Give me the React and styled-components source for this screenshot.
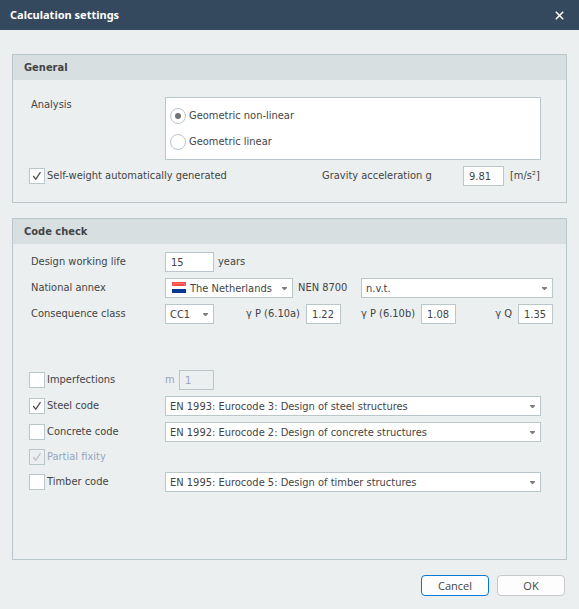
import React from "react";
import styled, { createGlobalStyle } from "styled-components";

const CODES = {
  steel: "EN 1993: Eurocode 3: Design of steel structures",
  concrete: "EN 1992: Eurocode 2: Design of concrete structures",
  timber: "EN 1995: Eurocode 5: Design of timber structures",
};

const Dropdown = ({ label, options, icon, width }) => (
  <SelectWrap $width={width}>
    {icon}
    <Select aria-label={label} $icon={Boolean(icon)}>
      {options.map((option) => (
        <option key={option}>{option}</option>
      ))}
    </Select>
    <Arrow viewBox="0 0 5 3" aria-hidden="true">
      <path d="M0 0H5V1L3 3H2L0 1Z" fill="#808080" />
    </Arrow>
  </SelectWrap>
);

const CheckOption = ({ children, ...props }) => (
  <CheckLabel $disabled={props.disabled}>
    <CheckWrap>
      <Check type="checkbox" {...props} />
      <Tick viewBox="0 0 16 16" aria-hidden="true">
        <path d="M4.2 8L6.8 11.2L11.5 4.2" />
      </Tick>
    </CheckWrap>
    {children}
  </CheckLabel>
);

const Factor = ({ id, label, value }) => (
  <FactorWrap>
    <label htmlFor={id}>{label}</label>
    <TextInput id={id} defaultValue={value} $width={35} />
  </FactorWrap>
);

const DutchFlag = () => (
  <Flag viewBox="0 0 14 11" aria-hidden="true">
    <path d="M0 0H14V4H0Z" fill="#f8484a" />
    <path d="M1.5 4V1.5H12.5V4" fill="none" stroke="#f97476" />
    <path d="M0 4H14V7H0Z" fill="#ffffff" />
    <path d="M0 7H14V11H0Z" fill="#0a3795" />
  </Flag>
);

const App = () => {
  return (
    <Dialog>
      <GlobalStyle />
      <TitleBar>
        <Title>Calculation settings</Title>
        <CloseButton aria-label="Close">
          <svg width="9" height="9" viewBox="0 0 9 9">
            <path d="M0.8 0.8L8.2 8.2M8.2 0.8L0.8 8.2" />
          </svg>
        </CloseButton>
      </TitleBar>

      <Content>
        <Group>
          <GroupTitle>General</GroupTitle>
          <GroupBody $top={17} $bottom={16}>
            <Row $top>
              <Caption id="analysis">Analysis</Caption>
              <RadioPanel role="radiogroup" aria-labelledby="analysis">
                <RadioLabel>
                  <Radio type="radio" name="analysis" defaultChecked />
                  Geometric non-linear
                </RadioLabel>
                <RadioLabel>
                  <Radio type="radio" name="analysis" />
                  Geometric linear
                </RadioLabel>
              </RadioPanel>
            </Row>
            <Row>
              <CheckOption defaultChecked>
                Self-weight automatically generated
              </CheckOption>
              <Gravity>
                <GravityLabel htmlFor="gravity">
                  Gravity acceleration g
                </GravityLabel>
                <TextInput id="gravity" defaultValue="9.81" $width={41} />
                <Unit>[m/s²]</Unit>
              </Gravity>
            </Row>
          </GroupBody>
        </Group>

        <Group $fill>
          <GroupTitle>Code check</GroupTitle>
          <GroupBody $top={8} $bottom={40}>
            <Row $wide>
              <Caption as="label" htmlFor="life">
                Design working life
              </Caption>
              <TextInput id="life" defaultValue="15" $width={49} />
              <Suffix>years</Suffix>
            </Row>
            <Row $wide>
              <Caption>National annex</Caption>
              <Dropdown
                label="National annex"
                options={["The Netherlands"]}
                icon={<DutchFlag />}
                width={128}
              />
              <AnnexLabel>NEN 8700</AnnexLabel>
              <Dropdown label="NEN 8700" options={["n.v.t."]} />
            </Row>
            <Row $wide>
              <Caption>Consequence class</Caption>
              <Dropdown
                label="Consequence class"
                options={["CC1", "CC2", "CC3"]}
                width={49}
              />
              <Factors>
                <Factor id="factor-a" label="γ P (6.10a)" value="1.22" />
                <Factor id="factor-b" label="γ P (6.10b)" value="1.08" />
                <Factor id="factor-q" label="γ Q" value="1.35" />
              </Factors>
            </Row>

            <Spacer />

            <Row>
              <Caption as="div">
                <CheckOption>Imperfections</CheckOption>
              </Caption>
              <Imperfection>
                <label htmlFor="imperfection">m</label>
                <TextInput
                  id="imperfection"
                  defaultValue="1"
                  $width={35}
                  disabled
                />
              </Imperfection>
            </Row>
            <Row>
              <Caption as="div">
                <CheckOption defaultChecked>Steel code</CheckOption>
              </Caption>
              <Dropdown label="Steel code" options={[CODES.steel]} />
            </Row>
            <Row>
              <Caption as="div">
                <CheckOption>Concrete code</CheckOption>
              </Caption>
              <Dropdown label="Concrete code" options={[CODES.concrete]} />
            </Row>
            <Row $short>
              <CheckOption defaultChecked disabled>
                Partial fixity
              </CheckOption>
            </Row>
            <Row>
              <Caption as="div">
                <CheckOption>Timber code</CheckOption>
              </Caption>
              <Dropdown label="Timber code" options={[CODES.timber]} />
            </Row>
          </GroupBody>
        </Group>
      </Content>

      <Footer>
        <Button $primary>Cancel</Button>
        <Button>OK</Button>
      </Footer>
    </Dialog>
  );
};

const GlobalStyle = createGlobalStyle`
  * {
    box-sizing: border-box;
  }

  body {
    margin: 0;
    background-color: #ebeff0;
  }

  body, input, select, button {
    font-family: Tahoma, "DejaVu Sans Condensed", sans-serif;
    font-size: 11px;
    color: #444444;
  }
`;

const Dialog = styled.main`
  min-height: 100vh;
  display: flex;
  flex-direction: column;
  line-height: 16px;
  white-space: nowrap;
`;

const TitleBar = styled.header`
  height: 30px;
  padding: 0 10px;
  display: flex;
  align-items: center;
  justify-content: space-between;
  background-color: #34495e;
`;

const Title = styled.h1`
  margin: 0;
  font-family: "Segoe UI", "Noto Sans", sans-serif;
  font-size: 11px;
  font-weight: 700;
  color: #ffffff;
`;

const CloseButton = styled.button`
  width: 20px;
  height: 20px;
  padding: 0;
  display: flex;
  align-items: center;
  justify-content: center;
  border: none;
  background: none;
  cursor: pointer;

  path {
    stroke: #ffffff;
    stroke-width: 1.5;
  }
`;

const Content = styled.div`
  padding: 24px 12px 15px;
  display: flex;
  flex-direction: column;
  flex: 1;
  gap: 15px;
`;

const Group = styled.section`
  border: 1px solid #b9c7cb;
  flex: ${({ $fill }) => ($fill ? 1 : "none")};
`;

const GroupTitle = styled.h2`
  height: 25px;
  margin: 0;
  padding: 0 11px;
  background-color: #d8dfe1;
  font-size: 11px;
  font-weight: 700;
  line-height: 25px;
`;

const GroupBody = styled.div`
  padding: ${({ $top, $bottom }) => `${$top}px 0 ${$bottom}px 16px`};
  display: flex;
  flex-direction: column;
  gap: 6px;
`;

const Row = styled.div`
  min-height: ${({ $short }) => ($short ? 18 : 20)}px;
  padding-right: ${({ $wide }) => ($wide ? 13 : 25)}px;
  display: flex;
  align-items: ${({ $top }) => ($top ? "flex-start" : "center")};
`;

const Caption = styled.span`
  width: 136px;
  padding-left: ${({ as }) => (as === "div" ? 0 : 2)}px;
  flex: none;
`;

const RadioPanel = styled.div`
  height: 63px;
  padding: 0 4px;
  display: flex;
  flex-direction: column;
  justify-content: center;
  flex: 1;
  gap: 10px;
  border: 1px solid #b9c7cb;
  background-color: #ffffff;
`;

const RadioLabel = styled.label`
  display: flex;
  align-items: center;
  gap: 3px;
`;

const Radio = styled.input`
  width: 16px;
  height: 16px;
  margin: 0;
  display: grid;
  place-content: center;
  appearance: none;
  border: 1px solid #b9c7cb;
  border-radius: 50%;
  background-color: #ffffff;

  &:checked::before {
    content: "";
    width: 6px;
    height: 6px;
    border-radius: 50%;
    background-color: #727272;
  }
`;

const CheckLabel = styled.label`
  display: flex;
  align-items: center;
  gap: 2px;
  color: ${({ $disabled }) => ($disabled ? "#97a5bd" : "inherit")};
`;

const CheckWrap = styled.span`
  width: 16px;
  height: 16px;
  display: grid;

  > * {
    grid-area: 1 / 1;
  }
`;

const Tick = styled.svg`
  width: 16px;
  height: 16px;
  visibility: hidden;
  pointer-events: none;
  fill: none;
  stroke: #4c4c4c;
  stroke-width: 1.2;
`;

const Check = styled.input`
  width: 16px;
  height: 16px;
  margin: 0;
  appearance: none;
  border: 1px solid #b9c7cb;
  background-color: #ffffff;

  &:disabled {
    background-color: transparent;
  }

  &:checked + ${Tick} {
    visibility: visible;
  }

  &:disabled + ${Tick} {
    stroke: #b9c1c4;
  }
`;

const TextInput = styled.input`
  width: ${({ $width }) => $width}px;
  height: 20px;
  padding: 0 5px;
  border: 1px solid #b9c7cb;
  border-radius: 0;
  background-color: #ffffff;

  &:disabled {
    background-color: transparent;
    color: #97a5bd;
  }
`;

const Gravity = styled.div`
  margin-left: auto;
  display: flex;
  align-items: center;
`;

const GravityLabel = styled.label`
  width: 141px;
`;

const Unit = styled.span`
  width: 37px;
  padding-left: 6px;
`;

const Suffix = styled.span`
  padding-left: 4px;
`;

const AnnexLabel = styled.span`
  width: 68px;
  padding-left: 5px;
  flex: none;
`;

const SelectWrap = styled.div`
  position: relative;
  width: ${({ $width }) => ($width ? `${$width}px` : "auto")};
  flex: ${({ $width }) => ($width ? "none" : 1)};
`;

const Select = styled.select`
  width: 100%;
  height: 20px;
  padding: 0 4px;
  padding-left: ${({ $icon }) => ($icon ? 24 : 4)}px;
  display: block;
  appearance: none;
  border: 1px solid #b9c7cb;
  border-radius: 0;
  background-color: #ffffff;
`;

const Arrow = styled.svg`
  position: absolute;
  top: 9px;
  right: 6px;
  width: 5px;
  height: 3px;
  pointer-events: none;
`;

const Flag = styled.svg`
  position: absolute;
  top: 4px;
  left: 7px;
  width: 14px;
  height: 11px;
  pointer-events: none;
`;

const Factors = styled.div`
  padding-left: 32px;
  display: flex;
  flex: 1;
  gap: 20px;
`;

const FactorWrap = styled.div`
  display: flex;
  align-items: center;
  gap: 6px;

  &:last-child {
    margin-left: auto;
  }
`;

const Spacer = styled.div`
  height: 34px;
`;

const Imperfection = styled.div`
  width: 49px;
  display: flex;
  align-items: center;
  justify-content: space-between;
  color: #97a5bd;
`;

const Footer = styled.footer`
  padding: 0 14px 13px;
  display: flex;
  justify-content: flex-end;
  gap: 8px;
`;

const Button = styled.button`
  width: 68px;
  height: 21px;
  padding: 0;
  border: 1px solid ${({ $primary }) => ($primary ? "#0078d4" : "#c8c8c8")};
  border-radius: 4px;
  background-color: #fdfdfd;
  font-family: "Segoe UI", "Open Sans", sans-serif;
  font-size: 11px;
  cursor: pointer;
`;

export default App;
